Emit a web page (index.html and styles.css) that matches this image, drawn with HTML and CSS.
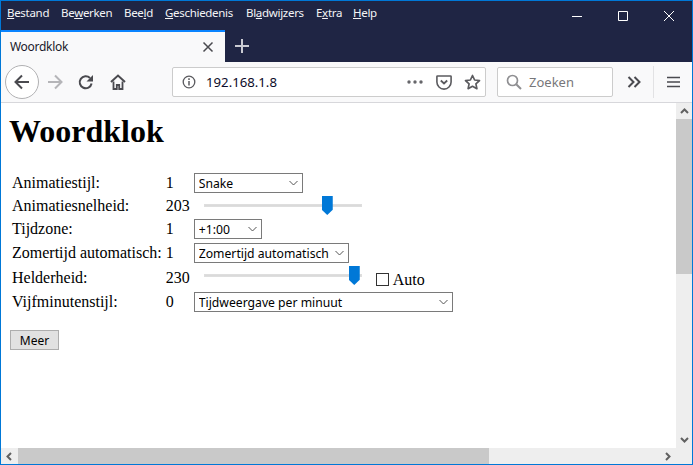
FILE: index.html
```html
<!DOCTYPE html>
<html lang="nl">
<head>
<meta charset="utf-8">
<title>Woordklok</title>
<link rel="stylesheet" href="styles.css">
</head>
<body>
<div class="window">
  <div class="chrome-dark">
    <div class="menubar">
      <nav class="menu">
        <span class="mi m1"><u>B</u>estand</span>
        <span class="mi m2">Be<u>w</u>erken</span>
        <span class="mi m3">Bee<u>l</u>d</span>
        <span class="mi m4"><u>G</u>eschiedenis</span>
        <span class="mi m5">Bl<u>a</u>dwijzers</span>
        <span class="mi m6">E<u>x</u>tra</span>
        <span class="mi m7"><u>H</u>elp</span>
      </nav>
      <div class="winctl">
        <svg width="12" height="12" viewBox="0 0 12 12"><path d="M1 6.5h10" stroke="#fff" fill="none"/></svg>
        <svg width="12" height="12" viewBox="0 0 12 12"><path d="M1.5 1.5h9v9h-9z" stroke="#fff" fill="none"/></svg>
        <svg width="12" height="12" viewBox="0 0 12 12"><path d="M1 1l10 10M11 1L1 11" stroke="#fff" fill="none"/></svg>
      </div>
    </div>
    <div class="tabbar">
      <div class="tab">
        <span class="tabtitle">Woordklok</span>
        <svg class="tabclose" width="12" height="12" viewBox="0 0 12 12"><path d="M1.5 1.5l9 9M10.5 1.5l-9 9" stroke="#4a4a4f" stroke-width="1.5" fill="none"/></svg>
      </div>
      <svg class="newtab" width="14" height="14" viewBox="0 0 14 14"><path d="M7 0v14M0 7h14" stroke="#c9cad2" stroke-width="2" fill="none"/></svg>
    </div>
  </div>
  <div class="toolbar">
    <div class="backbtn">
      <svg width="18" height="18" viewBox="0 0 18 18"><path d="M16 9H2.500M9 2.500L2.500 9 9 15.500" stroke="#4a4a4f" stroke-width="2" fill="none"/></svg>
    </div>
    <svg class="fwd" width="18" height="18" viewBox="0 0 18 18"><path d="M2 9h13.500M9 2.500L15.500 9 9 15.500" stroke="#b5b5b8" stroke-width="2" fill="none"/></svg>
    <svg class="reload" width="16" height="16" viewBox="0 0 16 16"><path d="M13.600 9.500A6 6 0 1 1 12 4" stroke="#4a4a4f" stroke-width="2" fill="none"/><path d="M15 1v6.500H8.500z" fill="#4a4a4f"/></svg>
    <svg class="home" width="16" height="16" viewBox="0 0 16 16"><path d="M1 8l7-6.500L15 8" stroke="#4a4a4f" stroke-width="2" fill="none"/><path d="M3.500 7.500V15h3.300v-4h2.400v4h3.300V7.500" stroke="#4a4a4f" stroke-width="1.800" fill="none"/></svg>
    <div class="urlbar">
      <svg class="info" width="14" height="14" viewBox="0 0 14 14"><circle cx="7" cy="7" r="5.800" stroke="#5b5b5f" stroke-width="1.300" fill="none"/><path d="M7 6v4.500M7 3.300v1.600" stroke="#5b5b5f" stroke-width="1.500" fill="none"/></svg>
      <span class="urltext">192.168.1.8</span>
      <svg class="dots" width="16" height="4" viewBox="0 0 16 4"><circle cx="2" cy="2" r="1.700" fill="#66666a"/><circle cx="8" cy="2" r="1.700" fill="#66666a"/><circle cx="14" cy="2" r="1.700" fill="#66666a"/></svg>
      <svg class="pocket" width="16" height="15" viewBox="0 0 16 15"><path d="M1.500 1h13a.6.600 0 0 1 .6.600V7a7 7 0 0 1-14.200 0V1.600A.6.600 0 0 1 1.500 1z" stroke="#5b5b5f" stroke-width="1.600" fill="none"/><path d="M4.800 5.500L8 8.500l3.200-3" stroke="#5b5b5f" stroke-width="1.800" fill="none"/></svg>
      <svg class="star" width="17" height="16" viewBox="0 0 17 16"><path d="M8.500 1.500l2.100 4.500 4.900.6-3.600 3.300 1 4.800-4.400-2.400-4.400 2.400 1-4.800L1.500 6.600 6.400 6z" stroke="#5b5b5f" stroke-width="1.700" stroke-linejoin="round" fill="none"/></svg>
    </div>
    <div class="searchbar">
      <svg width="16" height="16" viewBox="0 0 16 16"><circle cx="6.500" cy="6.500" r="5" stroke="#8f8f92" stroke-width="1.700" fill="none"/><path d="M10.200 10.200L15 15" stroke="#8f8f92" stroke-width="2" fill="none"/></svg>
      <span class="searchtext">Zoeken</span>
    </div>
    <svg class="more" width="14" height="12" viewBox="0 0 14 12"><path d="M1.500 1l5 5-5 5M7.500 1l5 5-5 5" stroke="#4a4a4f" stroke-width="2" fill="none"/></svg>
    <div class="sep"></div>
    <svg class="burger" width="13" height="12" viewBox="0 0 13 12"><path d="M0 1.500h13M0 6h13M0 10.500h13" stroke="#4a4a4f" stroke-width="1.700" fill="none"/></svg>
  </div>
  <div class="viewport">
    <div class="pagecol">
      <main class="page">
        <h1>Woordklok</h1>
        <table class="settings">
          <tr>
            <td>Animatiestijl:</td><td>1</td>
            <td><select class="sel w-snake"><option>Snake</option></select></td>
          </tr>
          <tr>
            <td>Animatiesnelheid:</td><td>203</td>
            <td><div class="slider"><div class="track"></div><div class="thumb t203"></div></div></td>
          </tr>
          <tr>
            <td>Tijdzone:</td><td>1</td>
            <td><select class="sel w-tz"><option>+1:00</option></select></td>
          </tr>
          <tr>
            <td>Zomertijd automatisch:</td><td>1</td>
            <td><select class="sel w-dst"><option>Zomertijd automatisch</option></select></td>
          </tr>
          <tr>
            <td>Helderheid:</td><td>230</td>
            <td class="brightcell">
              <div class="slider"><div class="track"></div><div class="thumb t230"></div></div>
              <label class="auto"><span class="check"></span>Auto</label>
            </td>
          </tr>
          <tr>
            <td>Vijfminutenstijl:</td><td>0</td>
            <td><select class="sel w-five"><option>Tijdweergave per minuut</option></select></td>
          </tr>
        </table>
        <button class="meer">Meer</button>
      </main>
      <div class="hscroll">
        <svg class="arrow-l" width="9" height="9" viewBox="0 0 9 9"><path d="M6 1L2.500 4.500 6 8" stroke="#606060" stroke-width="2" fill="none"/></svg>
        <div class="hthumb"></div>
        <svg class="arrow-r" width="9" height="9" viewBox="0 0 9 9"><path d="M3 1l3.500 3.500L3 8" stroke="#606060" stroke-width="2" fill="none"/></svg>
      </div>
    </div>
    <div class="vscroll">
      <svg width="9" height="9" viewBox="0 0 9 9"><path d="M1 6l3.500-3.500L8 6" stroke="#606060" stroke-width="2" fill="none"/></svg>
      <div class="vthumb"></div>
      <svg class="arrow-d" width="9" height="9" viewBox="0 0 9 9"><path d="M1 3l3.500 3.500L8 3" stroke="#606060" stroke-width="2" fill="none"/></svg>
    </div>
  </div>
</div>
</body>
</html>
```
FILE: styles.css
```css
* { box-sizing: border-box; }
html, body { margin: 0; height: 100%; overflow: hidden; background: #fff; }
.window {
  width: 693px; height: 465px; border: 1px solid #0078d7;
  display: flex; flex-direction: column; font-family: "Noto Sans", sans-serif;
}
.chrome-dark { background: #1f2544; height: 61px; flex: none; }
.menubar { height: 29px; display: flex; justify-content: space-between; }
.menu { display: flex; padding: 4px 0 0 6px; color: #f4f4f6; font-size: 11.5px; letter-spacing: -0.3px; line-height: 16px; }
.mi { display: block; white-space: nowrap; }
.m1 { width: 54px; } .m2 { width: 63px; } .m3 { width: 41px; } .m4 { width: 81px; }
.m5 { width: 70px; } .m6 { width: 37px; }
.winctl { display: flex; gap: 34px; padding: 9px 17px 0 0; }
.tabbar { height: 32px; display: flex; align-items: center; }
.tab {
  width: 224px; height: 32px; background: #f9f9fa; border-top: 2px solid #0a84ff;
  display: flex; align-items: center; justify-content: space-between; padding: 0 11px 0 9px;
}
.tabtitle { font-size: 12px; letter-spacing: -0.3px; color: #1a1a2a; margin-bottom: 2px; }
.newtab { margin-left: 10px; }
.toolbar {
  height: 41px; flex: none; background: #f9f9fa; border-bottom: 1px solid #d7d7db;
  display: flex; align-items: center; padding-left: 4px;
}
.backbtn {
  width: 34px; height: 34px; border-radius: 50%; border: 1px solid #b1b1b3; background: #fff;
  display: flex; align-items: center; justify-content: center;
}
.fwd { margin-left: 7px; }
.reload { margin-left: 14px; }
.home { margin-left: 16px; }
.urlbar {
  width: 314px; height: 30px; margin-left: 46px; background: #fff; border: 1px solid #ccc; border-radius: 2px;
  display: flex; align-items: center; padding-left: 9px;
}
.urltext { font-size: 13.2px; color: #0c0c2a; margin-left: 10px; flex: 1; }
.pocket { margin-left: 13px; }
.star { margin: 0 4px 0 12px; }
.searchbar {
  width: 116px; height: 30px; margin-left: 11px; background: #fff; border: 1px solid #ccc; border-radius: 2px;
  display: flex; align-items: center; padding-left: 8px;
}
.searchtext { font-size: 13px; color: #77777a; margin-left: 7px; }
.more { margin-left: 14px; }
.sep { width: 1px; height: 32px; background: #e2e2e4; margin-left: 12px; }
.burger { margin-left: 13px; }
.viewport { flex: 1; display: flex; min-height: 0; }
.pagecol { flex: 1; display: flex; flex-direction: column; min-width: 0; }
.page { flex: 1; padding: 10px 8px 0; font-family: "Liberation Serif", serif; font-size: 16px; color: #000; }
h1 { margin: 0 0 20px; font-size: 32px; line-height: 37px; font-weight: bold; }
.settings { border-collapse: separate; border-spacing: 2px; }
.settings td { padding: 1px; vertical-align: middle; white-space: nowrap; }
.sel {
  display: block; height: 20px; border: 1px solid #7a7a7a; border-radius: 0; background: #fff;
  font-family: "Noto Sans", sans-serif; font-size: 12.2px; color: #000; padding: 0 0 0 4px; margin: 0;
  appearance: none; -webkit-appearance: none; outline: 0;
  background-image: url("data:image/svg+xml,%3Csvg xmlns='http://www.w3.org/2000/svg' width='9' height='6'%3E%3Cpath d='M.5 1l4 4 4-4' stroke='%23555' fill='none'/%3E%3C/svg%3E");
  background-repeat: no-repeat;
  background-position: right 4px center;
}
.w-snake { width: 109px; }
.w-tz { width: 68px; }
.w-dst { width: 155px; }
.w-five { width: 259px; }
.slider { position: relative; width: 170px; height: 18px; }
.track { position: absolute; left: 10px; width: 158px; top: 7px; height: 3px; background: #dadada; border: 1px solid #dedede; }
.thumb {
  position: absolute; top: -1px; width: 11px; height: 19px; background: #0078d7;
  clip-path: polygon(0 0, 100% 0, 100% 72%, 50% 100%, 0 72%);
}
.t203 { left: 128px; }
.t230 { left: 155px; }
.brightcell { display: flex; height: 23px; align-items: flex-start; }
.auto { display: flex; align-items: center; margin: 4px 0 0 12px; line-height: 18px; font-size: 16px; }
.check { width: 13px; height: 13px; border: 1px solid #333; background: #fff; margin: -1px 4px 0 0; }
.meer {
  display: block; margin: 15px 0 0 1px; width: 49px; height: 20px; padding: 0; background: #e1e1e1;
  border: 1px solid #adadad; font-family: "Noto Sans", sans-serif; font-size: 12px; color: #000;
}
.hscroll { height: 16px; flex: none; background: #eee; display: flex; align-items: center; }
.arrow-l { margin-left: 4px; }
.hthumb { margin-left: 4px; width: 471px; height: 16px; background: #c9c9c9; }
.arrow-r { margin-left: auto; margin-right: 4px; }
.vscroll { width: 16px; flex: none; background: #eee; display: flex; flex-direction: column; align-items: center; padding-top: 4px; }
.vthumb { width: 16px; height: 155px; margin-top: 3px; background: #c9c9c9; }
.arrow-d { margin-top: auto; margin-bottom: 20px; }
```
